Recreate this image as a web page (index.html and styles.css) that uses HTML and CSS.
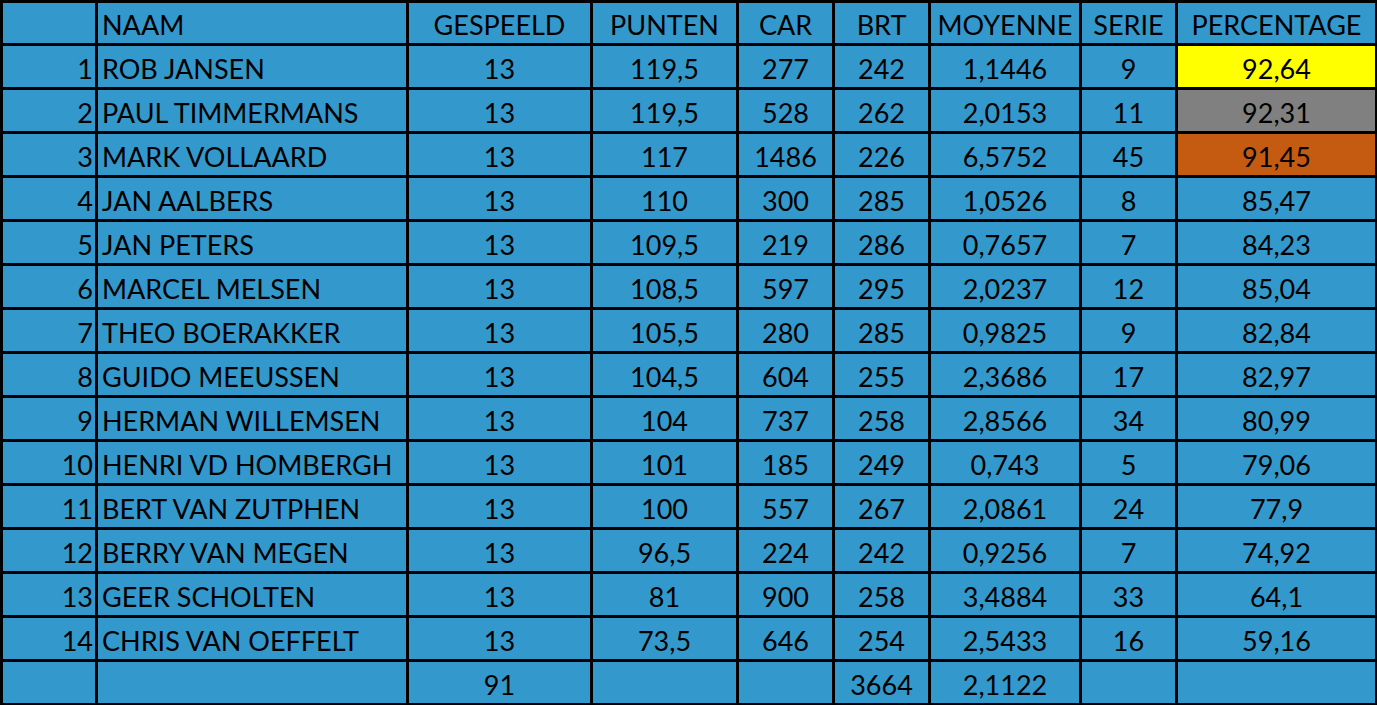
FILE: index.html
```html
<!DOCTYPE html>
<html lang="nl">
<head>
<meta charset="utf-8">
<title>Stand</title>
<link rel="stylesheet" href="styles.css">
</head>
<body>
<table class="stand">
  <colgroup>
    <col class="c-nr"><col class="c-naam"><col class="c-gesp"><col class="c-punt"><col class="c-car"><col class="c-brt"><col class="c-moy"><col class="c-serie"><col class="c-perc">
  </colgroup>
  <thead>
    <tr><th class="nr"></th><th class="naam">NAAM</th><th>GESPEELD</th><th>PUNTEN</th><th>CAR</th><th>BRT</th><th>MOYENNE</th><th>SERIE</th><th>PERCENTAGE</th></tr>
  </thead>
  <tbody>
    <tr><td class="nr">1</td><td class="naam">ROB JANSEN</td><td>13</td><td>119,5</td><td>277</td><td>242</td><td>1,1446</td><td>9</td><td class="goud">92,64</td></tr>
    <tr><td class="nr">2</td><td class="naam">PAUL TIMMERMANS</td><td>13</td><td>119,5</td><td>528</td><td>262</td><td>2,0153</td><td>11</td><td class="zilver">92,31</td></tr>
    <tr><td class="nr">3</td><td class="naam">MARK VOLLAARD</td><td>13</td><td>117</td><td>1486</td><td>226</td><td>6,5752</td><td>45</td><td class="brons">91,45</td></tr>
    <tr><td class="nr">4</td><td class="naam">JAN AALBERS</td><td>13</td><td>110</td><td>300</td><td>285</td><td>1,0526</td><td>8</td><td>85,47</td></tr>
    <tr><td class="nr">5</td><td class="naam">JAN PETERS</td><td>13</td><td>109,5</td><td>219</td><td>286</td><td>0,7657</td><td>7</td><td>84,23</td></tr>
    <tr><td class="nr">6</td><td class="naam">MARCEL MELSEN</td><td>13</td><td>108,5</td><td>597</td><td>295</td><td>2,0237</td><td>12</td><td>85,04</td></tr>
    <tr><td class="nr">7</td><td class="naam">THEO BOERAKKER</td><td>13</td><td>105,5</td><td>280</td><td>285</td><td>0,9825</td><td>9</td><td>82,84</td></tr>
    <tr><td class="nr">8</td><td class="naam">GUIDO MEEUSSEN</td><td>13</td><td>104,5</td><td>604</td><td>255</td><td>2,3686</td><td>17</td><td>82,97</td></tr>
    <tr><td class="nr">9</td><td class="naam">HERMAN WILLEMSEN</td><td>13</td><td>104</td><td>737</td><td>258</td><td>2,8566</td><td>34</td><td>80,99</td></tr>
    <tr><td class="nr">10</td><td class="naam">HENRI VD HOMBERGH</td><td>13</td><td>101</td><td>185</td><td>249</td><td>0,743</td><td>5</td><td>79,06</td></tr>
    <tr><td class="nr">11</td><td class="naam">BERT VAN ZUTPHEN</td><td>13</td><td>100</td><td>557</td><td>267</td><td>2,0861</td><td>24</td><td>77,9</td></tr>
    <tr><td class="nr">12</td><td class="naam">BERRY VAN MEGEN</td><td>13</td><td>96,5</td><td>224</td><td>242</td><td>0,9256</td><td>7</td><td>74,92</td></tr>
    <tr><td class="nr">13</td><td class="naam">GEER SCHOLTEN</td><td>13</td><td>81</td><td>900</td><td>258</td><td>3,4884</td><td>33</td><td>64,1</td></tr>
    <tr><td class="nr">14</td><td class="naam">CHRIS VAN OEFFELT</td><td>13</td><td>73,5</td><td>646</td><td>254</td><td>2,5433</td><td>16</td><td>59,16</td></tr>
  </tbody>
  <tfoot>
    <tr><td class="nr"></td><td class="naam"></td><td>91</td><td></td><td></td><td>3664</td><td>2,1122</td><td></td><td></td></tr>
  </tfoot>
</table>
</body>
</html>
```
FILE: styles.css
```css
html, body {
  margin: 0;
  padding: 0;
  background: #ffffff;
}
.stand {
  border-collapse: collapse;
  table-layout: fixed;
  width: 1376px;
  margin: 0;
  font-family: Lato, "Liberation Sans", sans-serif;
  font-size: 27px;
  color: #000000;
  background: #3399cc;
}
.c-nr { width: 95px; }
.c-naam { width: 311px; }
.c-gesp { width: 184px; }
.c-punt { width: 146px; }
.c-car { width: 96px; }
.c-brt { width: 96px; }
.c-moy { width: 151px; }
.c-serie { width: 96px; }
.c-perc { width: 200px; }
.stand th, .stand td {
  border: 3px solid #000;
  height: 44px;
  padding: 3px 2px 0 2px;
  box-sizing: border-box;
  text-align: center;
  vertical-align: middle;
  font-weight: normal;
  white-space: nowrap;
  overflow: hidden;
}
.stand thead th { height: 43px; }
.stand .nr { text-align: right; padding-right: 2px; }
.stand .naam { text-align: left; padding-left: 4px; }
.goud { background: #ffff00; }
.zilver { background: #808080; }
.brons { background: #c55a11; }
```
